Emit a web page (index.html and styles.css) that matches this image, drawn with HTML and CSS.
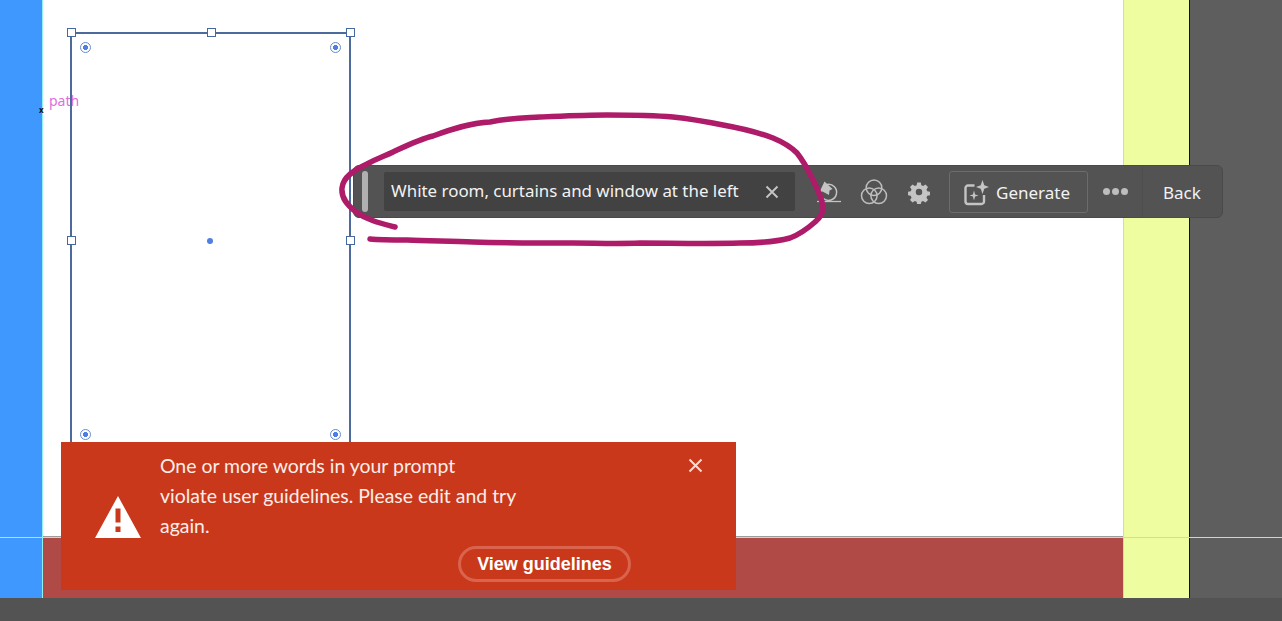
FILE: index.html
```html
<!DOCTYPE html>
<html lang="en">
<head>
<meta charset="utf-8">
<title>Generative prompt error</title>
<link rel="stylesheet" href="styles.css">
</head>
<body>
<div class="app">
  <div class="workspace">
    <div class="rail"></div>
    <div class="artboard">
      <div class="page"></div>
      <div class="bleed"></div>
    </div>
    <div class="slug"></div>
    <div class="pasteboard"></div>
  </div>
  <div class="statusbar"></div>

  <i class="guide guide-h"></i>
  <i class="guide guide-v guide-left"></i>
  <i class="guide guide-v guide-right"></i>

  <span class="path-label">path</span>
  <span class="anchor-mark">x</span>

  <div class="selection">
    <i class="handle h-tl"></i><i class="handle h-tc"></i><i class="handle h-tr"></i>
    <i class="handle h-ml"></i><i class="handle h-mr"></i>
    <i class="widget w-tl"></i><i class="widget w-tr"></i><i class="widget w-bl"></i><i class="widget w-br"></i>
    <i class="center-dot"></i>
  </div>

  <div class="toolbar">
    <span class="grip"></span>
    <div class="prompt">
      <span class="prompt-text">White room, curtains and window at the left</span>
      <svg class="prompt-clear" width="14" height="14" viewBox="0 0 14 14"><path d="M1.500 1.500l11 11M12.500 1.500l-11 11" stroke="#c4c4c4" stroke-width="1.900" fill="none"/></svg>
    </div>
    <svg class="tool tool-style" width="26" height="26" viewBox="0 0 26 26" fill="none">
      <path d="M1 22.500h24" stroke="#c4c4c4" stroke-width="1.300"/>
      <path d="M11 5.500a8 8 0 1 1-3.500 14" stroke="#c4c4c4" stroke-width="1.500"/>
      <path d="M8.500 2.500l8 7.500-3 1.500-.5 4.500-6.500-3.500-3 .5z" fill="#c4c4c4"/>
    </svg>
    <svg class="tool tool-color" width="28" height="28" viewBox="0 0 28 28" fill="none" stroke="#bdbdbd" stroke-width="1.500">
      <circle cx="14" cy="9.800" r="7.800"/>
      <circle cx="9.300" cy="17.800" r="7.800"/>
      <circle cx="18.700" cy="17.800" r="7.800"/>
    </svg>
    <svg class="tool tool-gear" width="24" height="24" viewBox="0 0 24 24">
      <path fill-rule="evenodd" fill="#c4c4c4" d="M10 1.500h4l.6 3 2 .9 2.600-1.700 2.800 2.800-1.700 2.600.9 2 3 .6v4l-3 .6-.9 2 1.700 2.600-2.800 2.800-2.600-1.700-2 .9-.6 3h-4l-.6-3-2-.9-2.600 1.700-2.800-2.800 1.700-2.600-.9-2-3-.6v-4l3-.6.9-2-1.700-2.600 2.800-2.800 2.600 1.700 2-.9zM12 8.400a3.600 3.600 0 1 0 0 7.200 3.600 3.600 0 0 0 0-7.200z" transform="translate(1.200 1.200) scale(.9)"/>
    </svg>
    <button class="generate">
      <svg width="26" height="26" viewBox="0 0 26 26" fill="none">
        <path d="M11.500 5.500H5a2.500 2.500 0 0 0-2.500 2.500v13.500A2.500 2.500 0 0 0 5 24h13.500a2.500 2.500 0 0 0 2.500-2.500V15" stroke="#c4c4c4" stroke-width="2.400"/>
        <path d="M19.500 0l1.800 5.200 4.700 1.800-4.700 1.800-1.800 5.200-1.800-5.200-4.700-1.800 4.700-1.800z" fill="#c4c4c4"/>
        <path d="M11 10.500l1.100 3.900 3.400 1.100-3.400 1.100-1.100 3.900-1.100-3.900-3.400-1.100 3.400-1.100z" fill="#c4c4c4"/>
      </svg>
      <span>Generate</span>
    </button>
    <span class="more"><i></i><i></i><i></i></span>
    <span class="back">Back</span>
  </div>

  <svg class="scribble" width="1282" height="621" viewBox="0 0 1282 621" fill="none">
    <path d="M395 227C380 223 367 220 356 212C347 205 341 198 342 188C343 177 354 170 367 164C378 158 385 156 393 152C408 145 420 139 433 136C452 129 470 123 490 122C510 118 525 118 540 117C565 116 585 115 607 115C630 115 650 115 673 117C692 119 708 122 723 125C745 129 760 133 773 138C785 143 792 148 797 153C805 163 809 172 813 180C818 190 822 198 823 207C823 214 820 218 815 222C806 230 798 235 790 238C775 242 758 243 740 243C705 244 670 243 640 243C615 244 595 243 573 243C540 243 505 243 473 242C450 241 428 241 407 240C393 240 380 240 370 239" stroke="#AE1B68" stroke-width="5.500" stroke-linecap="round" stroke-linejoin="round"/>
  </svg>

  <div class="alert">
    <svg class="alert-icon" width="48" height="44" viewBox="0 0 48 44">
      <path fill-rule="evenodd" fill="#fff" d="M24 1L47 43H1zM21.500 13.500v14h5v-14zM21.500 31.500v5.500h5v-5.500z"/>
    </svg>
    <div class="alert-body">
      <p class="alert-text">One or more words in your prompt<br>violate user guidelines. Please edit and try<br>again.</p>
      <a class="alert-link">View guidelines</a>
    </div>
    <svg class="alert-close" width="15" height="15" viewBox="0 0 15 15"><path d="M1.500 1.500l12 12M13.500 1.500l-12 12" stroke="#f6dcd6" stroke-width="2" fill="none"/></svg>
  </div>
</div>
</body>
</html>
```
FILE: styles.css
```css
* { box-sizing: border-box; }
html, body { margin: 0; padding: 0; overflow: hidden; }
body { font-family: "Noto Sans", "Open Sans", sans-serif; }

.app { position: relative; width: 1282px; height: 621px; display: flex; flex-direction: column; background: #535353; overflow: hidden; }
.workspace { display: flex; height: 598px; }
.rail { width: 42px; background: #3f98fd; }
.artboard { width: 1081px; display: flex; flex-direction: column; }
.page { height: 536px; background: #fff; }
.bleed { flex: 1; background: #b04a46; border-top: 2px solid #9c9c9c; }
.slug { width: 67px; background: #eefd9f; border-right: 1px solid #111; }
.pasteboard { flex: 1; background: #5e5e5e; }
.statusbar { flex: 1; background: #535353; }

.guide { position: absolute; display: block; background: #8ff0ee; }
.guide-h { left: 0; top: 537px; width: 1282px; height: 1px; }
.guide-v { top: 0; width: 1px; height: 598px; }
.guide-left { left: 42px; }
.guide-right { left: 1123px; }

.path-label { position: absolute; left: 49px; top: 91px; font-size: 14px; line-height: 19px; color: #dd6fe0; }
.anchor-mark { position: absolute; left: 39px; top: 104px; font-size: 8px; line-height: 12px; font-weight: 700; color: #111; }

.selection { position: absolute; left: 70px; top: 32px; width: 281px; height: 440px; border: 2px solid #4c6a9c; }
.handle { position: absolute; display: block; width: 9px; height: 9px; background: #fff; border: 1px solid #44689f; }
.h-tl { left: -5px; top: -6px; }
.h-tc { left: 135px; top: -6px; }
.h-tr { right: -6px; top: -6px; }
.h-ml { left: -5px; top: 202px; }
.h-mr { right: -6px; top: 202px; }
.widget { position: absolute; display: block; width: 11px; height: 11px; border-radius: 50%; background: radial-gradient(circle, #4f7fe0 0 2.400px, #fff 2.800px); border: 1.500px solid #668bd0; }
.w-tl { left: 8px; top: 8px; }
.w-tr { right: 8px; top: 8px; }
.w-bl { left: 8px; top: 395px; }
.w-br { right: 8px; top: 395px; }
.center-dot { position: absolute; display: block; left: 135px; top: 204px; width: 6px; height: 6px; border-radius: 50%; background: #4f7fe0; }

.toolbar { position: absolute; left: 353px; top: 165px; width: 870px; height: 53px; display: flex; align-items: center; background: #535353; border: 1px solid #4a4a4a; border-radius: 6px; color: #f2f2f2; }
.grip { width: 6px; height: 41px; margin-left: 8px; border-radius: 3px; background: #b0b0b0; }
.prompt { width: 411px; height: 39px; margin-left: 16px; padding: 0 16px 0 7px; display: flex; align-items: center; justify-content: space-between; background: #424242; border-radius: 2px; }
.prompt-text { font-size: 16.900px; line-height: 36px; padding-bottom: 2px; white-space: nowrap; }
.prompt-clear { flex: none; }
.tool { flex: none; display: block; }
.tool-style { margin-left: 21px; }
.tool-color { margin-left: 18px; }
.tool-gear { margin-left: 19px; }
.generate { width: 139px; height: 42px; margin-left: 18px; padding: 2px 0 0 13px; display: flex; align-items: center; gap: 7px; background: transparent; border: 1px solid #6c6c6c; border-radius: 3px; color: #f2f2f2; font: inherit; font-size: 17px; }
.more { margin-left: 15px; display: flex; gap: 2px; }
.more i { display: block; width: 7px; height: 7px; border-radius: 50%; background: #bdbdbd; }
.back { margin-left: 14px; padding: 2px 0 0 20px; height: 100%; display: flex; align-items: center; border-left: 1px solid #4e4e4e; font-size: 17px; }

.scribble { position: absolute; left: 0; top: 0; pointer-events: none; }

.alert { position: absolute; left: 61px; top: 442px; width: 675px; height: 148px; display: flex; padding: 9px 0 0 33px; background: #c9381b; color: #fbeee9; }
.alert-icon { flex: none; margin-top: 44px; }
.alert-body { margin-left: 18px; }
.alert-text { margin: 0; font-family: "Lato", "Noto Sans", sans-serif; font-size: 19.450px; line-height: 30px; white-space: nowrap; }
.alert-link { display: flex; align-items: center; justify-content: center; width: 173px; height: 36px; margin: 5px 0 0 298px; border: 3px solid #d9634d; border-radius: 18px; font-family: "Liberation Sans", Arial, sans-serif; font-weight: 700; font-size: 18px; color: #fff; }
.alert-close { position: absolute; left: 627px; top: 16px; }
```
